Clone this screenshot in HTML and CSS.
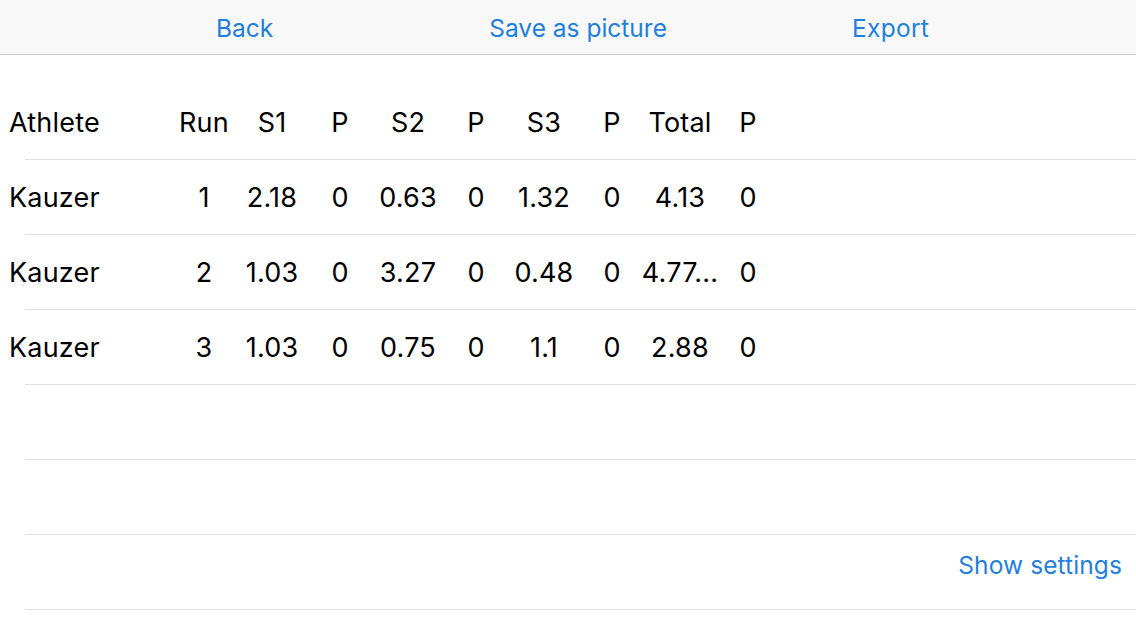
FILE: index.html
```
<!DOCTYPE html>
<html>
<head>
<meta charset="utf-8">
<link rel="stylesheet" href="styles.css">
</head>
<body>
<div class="toolbar">
  <span class="tb-btn tb-back">Back</span>
  <span class="tb-btn tb-save">Save as picture</span>
  <span class="tb-btn tb-export">Export</span>
</div>
<div class="table">
  <div class="row header">
    <div class="cell name">Athlete</div>
    <div class="cell">Run</div>
    <div class="cell">S1</div>
    <div class="cell">P</div>
    <div class="cell">S2</div>
    <div class="cell">P</div>
    <div class="cell">S3</div>
    <div class="cell">P</div>
    <div class="cell">Total</div>
    <div class="cell">P</div>
  </div>
  <div class="row">
    <div class="cell name">Kauzer</div>
    <div class="cell">1</div>
    <div class="cell">2.18</div>
    <div class="cell">0</div>
    <div class="cell">0.63</div>
    <div class="cell">0</div>
    <div class="cell">1.32</div>
    <div class="cell">0</div>
    <div class="cell">4.13</div>
    <div class="cell">0</div>
  </div>
  <div class="row">
    <div class="cell name">Kauzer</div>
    <div class="cell">2</div>
    <div class="cell">1.03</div>
    <div class="cell">0</div>
    <div class="cell">3.27</div>
    <div class="cell">0</div>
    <div class="cell">0.48</div>
    <div class="cell">0</div>
    <div class="cell">4.77...</div>
    <div class="cell">0</div>
  </div>
  <div class="row">
    <div class="cell name">Kauzer</div>
    <div class="cell">3</div>
    <div class="cell">1.03</div>
    <div class="cell">0</div>
    <div class="cell">0.75</div>
    <div class="cell">0</div>
    <div class="cell">1.1</div>
    <div class="cell">0</div>
    <div class="cell">2.88</div>
    <div class="cell">0</div>
  </div>
  <div class="row empty"></div>
  <div class="row empty"></div>
  <div class="row settings"><span class="settings-link">Show settings</span></div>
</div>
</body>
</html>
```
FILE: styles.css
```
html, body {
  margin: 0;
  padding: 0;
  background: #ffffff;
}
body {
  width: 1136px;
  height: 639px;
  overflow: hidden;
  font-family: Inter, "Liberation Sans", sans-serif;
  color: #000;
}
.toolbar {
  height: 52px;
  padding-top: 2px;
  background: #f8f8f8;
  border-bottom: 1px solid #c9c9c9;
  display: flex;
  align-items: center;
  font-size: 24.5px;
  color: #1f7fdb;
}
.tb-btn {
  white-space: nowrap;
}
.tb-back { margin-left: 216px; }
.tb-save { margin-left: 216px; }
.tb-export { margin-left: 185px; letter-spacing: 0.3px; }
.table {
  margin-top: 30px;
}
.row {
  display: flex;
  align-items: center;
  font-size: 27px;
  letter-spacing: 0.2px;
  border-bottom: 1px solid #e0e0e0;
  margin-left: 25px;
  padding-top: 1px;
  box-sizing: border-box;
  height: 75px;
}
.cell {
  width: 68px;
  display: flex;
  justify-content: center;
  white-space: nowrap;
}
.cell.name {
  width: 161px;
  margin-left: -16px;
  justify-content: flex-start;
}
.settings {
  justify-content: flex-end;
  padding-right: 14px;
  padding-bottom: 16px;
}
.settings-link {
  color: #1f7fdb;
  font-size: 24.5px;
  letter-spacing: 0.1px;
}
```
